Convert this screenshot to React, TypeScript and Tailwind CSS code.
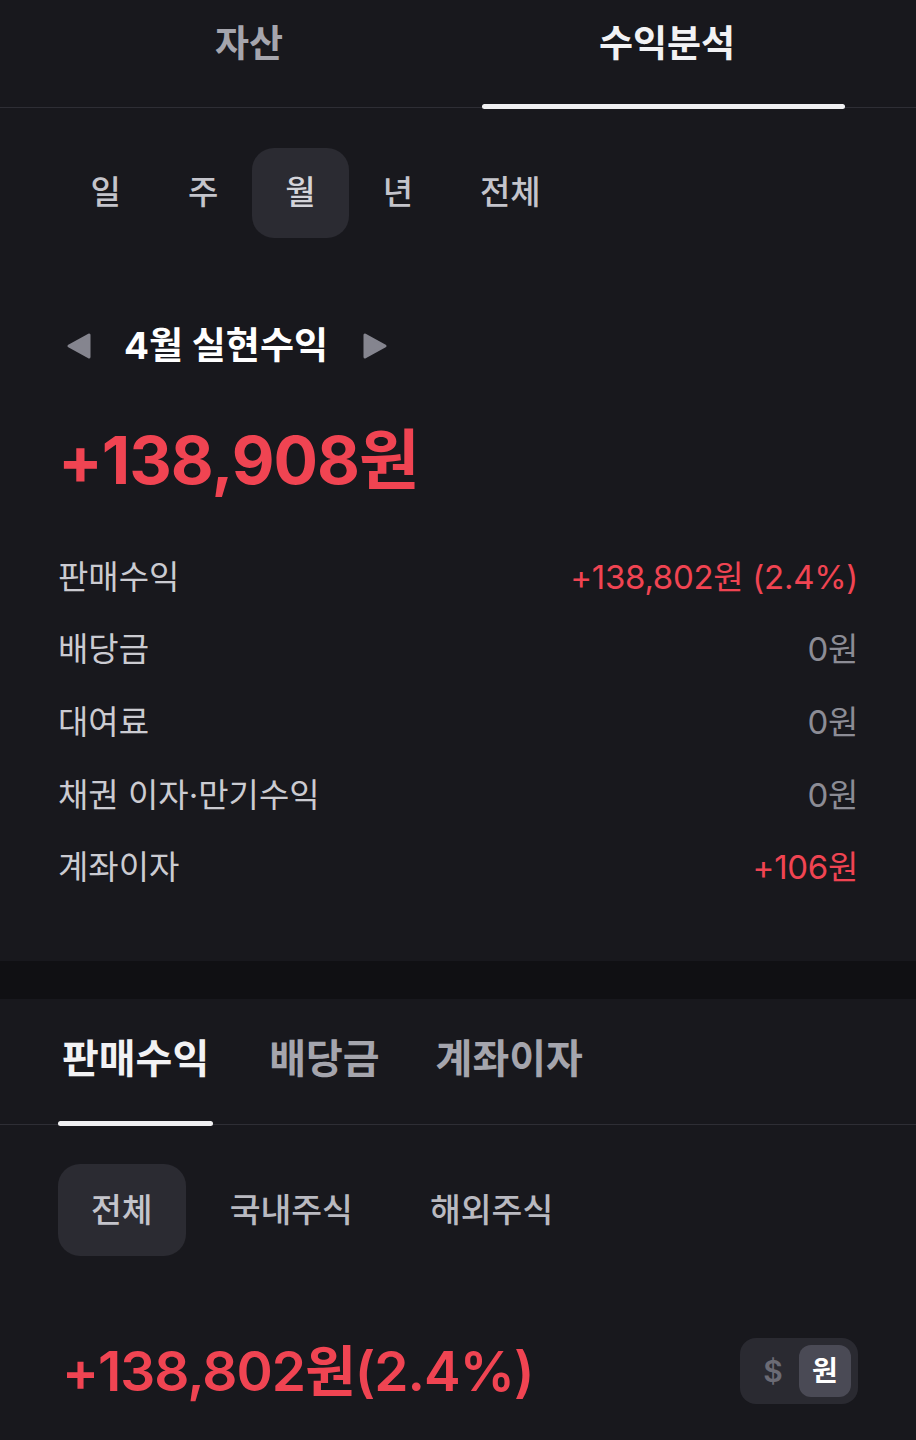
import React from "react";

const font = { fontFamily: '"Inter", "Noto Sans CJK KR", sans-serif' };

const periods = ["일", "주", "월", "년", "전체"];
const rows = [
  { label: "판매수익", value: "+138,802원 (2.4%)", red: true },
  { label: "배당금", value: "0원", red: false },
  { label: "대여료", value: "0원", red: false },
  { label: "채권 이자·만기수익", value: "0원", red: false },
  { label: "계좌이자", value: "+106원", red: true },
];

function Triangle({ dir }: { dir: "left" | "right" }) {
  return (
    <svg width="26" height="28" viewBox="0 0 26 28">
      {dir === "left" ? (
        <path d="M3 14 L23 3 L23 25 Z" fill="#85858f" stroke="#85858f" strokeWidth="3" strokeLinejoin="round" />
      ) : (
        <path d="M23 14 L3 3 L3 25 Z" fill="#85858f" stroke="#85858f" strokeWidth="3" strokeLinejoin="round" />
      )}
    </svg>
  );
}

export default function App() {
  return (
    <div className="w-[916px] h-[1440px] overflow-hidden bg-[#18181d]" style={font}>
      {/* top tabs */}
      <div className="relative flex h-[108px] border-b border-[#2e2e35] px-[40px]">
        <div className="flex-1 flex justify-center pt-[20px]">
          <span className="text-[37px] leading-[48px] font-semibold text-[#a5a5ad]">자산</span>
        </div>
        <div className="relative flex-1 flex justify-center pt-[20px]">
          <span className="text-[37px] leading-[48px] font-bold text-[#f2f2f4]">수익분석</span>
          <div className="absolute bottom-[-2px] left-[24px] right-[31px] h-[5px] rounded-full bg-[#f0f0f2]" />
        </div>
      </div>

      {/* period selector */}
      <div className="flex pl-[57px] mt-[40px]">
        {periods.map((p) => (
          <div
            key={p}
            className={`h-[90px] px-[33.5px] flex items-center rounded-[22px] text-[33px] font-medium ${
              p === "월" ? "bg-[#2b2b32] text-[#d4d4da]" : "text-[#c4c4cb]"
            }`}
          >
            {p}
          </div>
        ))}
      </div>

      {/* month title */}
      <div className="flex items-center pl-[66px] mt-[84px] h-[48px]">
        <Triangle dir="left" />
        <span className="ml-[32px] text-[37px] font-bold text-white">4월 실현수익</span>
        <span className="ml-[34px]">
          <Triangle dir="right" />
        </span>
      </div>

      <div className="pl-[58px] mt-[55px] text-[66px] leading-[70px] font-bold text-[#f04452] tracking-[-1px]">
        +138,908원
      </div>

      {/* breakdown */}
      <div className="px-[58px] mt-[46px] flex flex-col">
        {rows.map((r) => (
          <div key={r.label} className="h-[72.7px] flex items-center justify-between">
            <span className="text-[33px] text-[#cbcbd1]">{r.label}</span>
            <span className={`text-[33px] tracking-[-0.3px] ${r.red ? "text-[#f04452]" : "text-[#8c8c95]"}`}>
              {r.value}
            </span>
          </div>
        ))}
      </div>

      {/* section gap */}
      <div className="mt-[57px] h-[38px] bg-[#101013]" />

      {/* sub tabs */}
      <div className="flex gap-[56px] h-[126px] border-b border-[#2e2e35] px-[58px]">
        <div className="relative flex items-start pt-[36px]">
          <span className="px-[4px] text-[40px] leading-[48px] font-bold text-[#f2f2f4]">판매수익</span>
          <div className="absolute bottom-[-2px] left-0 right-0 h-[5px] rounded-full bg-[#f0f0f2]" />
        </div>
        <div className="flex items-start pt-[36px]">
          <span className="text-[40px] leading-[48px] font-semibold text-[#a5a5ad]">배당금</span>
        </div>
        <div className="flex items-start pt-[36px]">
          <span className="text-[40px] leading-[48px] font-semibold text-[#a5a5ad]">계좌이자</span>
        </div>
      </div>

      {/* filter */}
      <div className="flex gap-[11px] pl-[58px] mt-[39px]">
        {["전체", "국내주식", "해외주식"].map((f) => (
          <div
            key={f}
            className={`h-[92px] px-[33px] flex items-center rounded-[22px] text-[33.5px] font-medium ${
              f === "전체" ? "bg-[#2b2b32] text-[#c4c4cb]" : "text-[#b9b9c0]"
            }`}
          >
            {f}
          </div>
        ))}
      </div>

      {/* total */}
      <div className="flex items-center justify-between px-[58px] mt-[82px]">
        <span className="pl-[4px] text-[55px] leading-[66px] font-semibold text-[#f04452] tracking-[-1px]">
          +138,802원(2.4%)
        </span>
        <div className="flex items-center h-[66px] w-[118px] rounded-[16px] bg-[#2a2a31] px-[7px]">
          <span className="flex-1 text-center text-[30px] font-semibold text-[#6b6b75]">$</span>
          <span className="w-[52px] h-[52px] rounded-[12px] bg-[#4a4a55] flex items-center justify-center text-[28px] font-bold text-white">
            원
          </span>
        </div>
      </div>
    </div>
  );
}
